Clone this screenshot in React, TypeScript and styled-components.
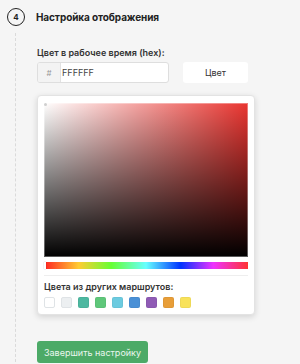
import React from 'react';
import styled, { createGlobalStyle } from 'styled-components';

const GlobalStyle = createGlobalStyle`
  html, body {
    margin: 0;
    padding: 0;
    background: #f5f5f5;
  }
  body {
    font-family: "Inter", "Roboto", sans-serif;
    color: #222;
  }
`

const Step = styled.section`
  padding: 8px 0 0 7px;
  width: 300px;
  box-sizing: border-box;
`

const StepHeader = styled.div`
  display: flex;
  flex-direction: row;
  align-items: center;
  gap: 11px;
`

const StepNumber = styled.div`
  width: 18px;
  height: 18px;
  box-sizing: border-box;
  border: 1.5px solid #222;
  border-radius: 50%;
  display: flex;
  align-items: center;
  justify-content: center;
  font-size: 8px;
  font-weight: 700;
`

const StepTitle = styled.h3`
  margin: 0;
  font-size: 10px;
  font-weight: 700;
  letter-spacing: -0.1px;
`

const StepBody = styled.div`
  margin: 7px 0 0 8px;
  padding: 14px 0 4px 21px;
  border-left: 1px dashed #dadada;
  min-height: 320px;
  box-sizing: border-box;
`

const FieldLabel = styled.label`
  display: block;
  font-size: 9px;
  line-height: 12px;
  font-weight: 600;
  color: #333;
  margin-bottom: 3px;
`

const FieldRow = styled.div`
  display: flex;
  flex-direction: row;
  align-items: center;
  gap: 14px;
`

const InputGroup = styled.div`
  display: flex;
  width: 132px;
  height: 21px;
  box-sizing: border-box;
  border: 1px solid #dedede;
  border-radius: 3px;
  background: #fff;
  overflow: hidden;
`

const Addon = styled.span`
  width: 22px;
  display: flex;
  align-items: center;
  justify-content: center;
  background: #f3f3f3;
  border-right: 1px solid #e2e2e2;
  color: #999;
  font-size: 8px;
`

const HexInput = styled.input`
  flex: 1;
  min-width: 0;
  border: none;
  outline: none;
  padding: 0 0 0 1px;
  font-family: inherit;
  font-size: 9px;
  color: #444;
  background: transparent;
`

const ColorButton = styled.button`
  width: 65px;
  height: 21px;
  border: none;
  border-radius: 3px;
  background: #fff;
  font-family: inherit;
  font-size: 9px;
  color: #333;
  cursor: pointer;
`

const Popover = styled.div`
  margin-top: 12px;
  width: 218px;
  box-sizing: border-box;
  padding: 7px 6px 6px 6px;
  background: #fff;
  border: 1px solid #e3e3e3;
  border-radius: 4px;
  box-shadow: 0 2px 6px rgba(0, 0, 0, 0.14);
`

const Saturation = styled.div<{ hue: string }>`
  position: relative;
  height: 154px;
  background:
    linear-gradient(to top, #000, rgba(0, 0, 0, 0)),
    linear-gradient(to right, #fff, rgba(255, 255, 255, 0)),
    ${p => p.hue};
  box-shadow: inset 0 0 0 1px rgba(255, 255, 255, 0.35);
`

const SatPointer = styled.span`
  position: absolute;
  left: 0;
  top: 0;
  width: 3px;
  height: 3px;
  border-radius: 50%;
  background: #cfcfcf;
`

const HueBar = styled.div`
  position: relative;
  margin-top: 5px;
  height: 7px;
  background: linear-gradient(to right,
    #f22 0%, #fc3 17%, #6f3 33%, #6ff 50%, #03f 67%, #e3f 83%, #f33 100%);
`

const HuePointer = styled.span`
  position: absolute;
  left: 0;
  top: 0;
  width: 2px;
  height: 7px;
  background: #fff;
  box-shadow: 0 0 1px rgba(0, 0, 0, 0.5);
`

const Divider = styled.div`
  margin-top: 6px;
  height: 1px;
  background: #eee;
`

const PresetLabel = styled.div`
  margin-top: 5px;
  font-size: 9px;
  line-height: 12px;
  font-weight: 600;
  color: #333;
`

const Swatches = styled.div`
  display: flex;
  flex-direction: row;
  gap: 6px;
  margin-top: 4px;
`

const Swatch = styled.span<{ color: string }>`
  width: 11px;
  height: 11px;
  box-sizing: border-box;
  border-radius: 2px;
  background: ${p => p.color};
  border: 1px solid ${p => (p.color === '#ffffff' || p.color === '#eceff1') ? '#dfe3e6' : 'rgba(0,0,0,0.04)'};
  cursor: pointer;
`

const FinishButton = styled.button`
  margin-top: 26px;
  width: 111px;
  height: 22px;
  border: none;
  border-radius: 3px;
  background: #4caa67;
  color: #eaf6ee;
  font-family: inherit;
  font-size: 9px;
  cursor: pointer;
`

const presets = [
  '#ffffff',
  '#eceff1',
  '#4db8a0',
  '#5fc77a',
  '#6ccbe0',
  '#4a90d6',
  '#8f5bb5',
  '#e89e38',
  '#f8e25a',
]

export default function App() {
  return (
    <>
      <GlobalStyle />
      <Step>
        <StepHeader>
          <StepNumber>4</StepNumber>
          <StepTitle>Настройка отображения</StepTitle>
        </StepHeader>
        <StepBody>
          <FieldLabel>Цвет в рабочее время (hex):</FieldLabel>
          <FieldRow>
            <InputGroup>
              <Addon>#</Addon>
              <HexInput defaultValue='FFFFFF' />
            </InputGroup>
            <ColorButton>Цвет</ColorButton>
          </FieldRow>
          <Popover>
            <Saturation hue='#ea3530'>
              <SatPointer />
            </Saturation>
            <HueBar>
              <HuePointer />
            </HueBar>
            <Divider />
            <PresetLabel>Цвета из других маршрутов:</PresetLabel>
            <Swatches>
              {presets.map(color =>
                <Swatch key={color} color={color} />
              )}
            </Swatches>
          </Popover>
          <FinishButton>Завершить настройку</FinishButton>
        </StepBody>
      </Step>
    </>
  )
}
